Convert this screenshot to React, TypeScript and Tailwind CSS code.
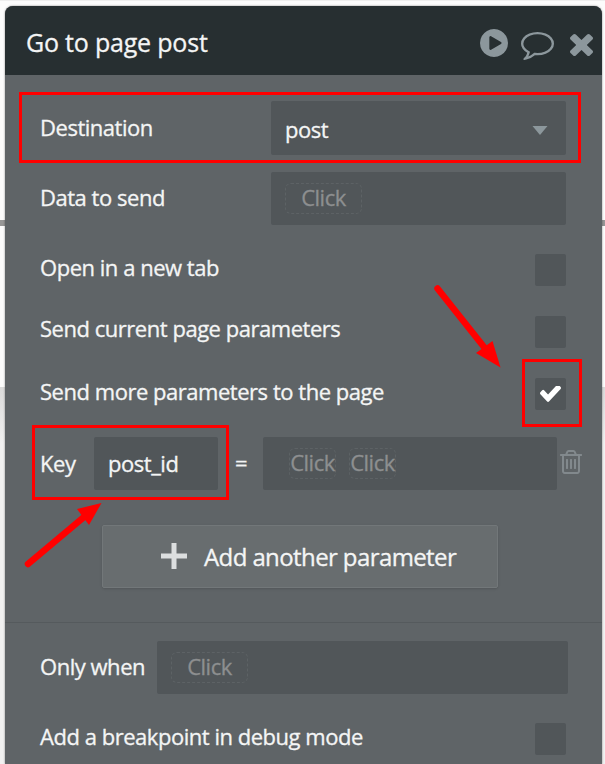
import type { ReactNode } from "react";

type IconProps = { box: string; d: string; className: string };

function Glyph({ box, d, className }: IconProps) {
  return (
    <svg viewBox={box} preserveAspectRatio="none" fill="currentColor" className={`block shrink-0 ${className}`}>
      <path d={d} />
    </svg>
  );
}

const PLAY =
  "M896 128q209 0 385.5 103t279.5 279.5 103 385.5-103 385.5-279.5 279.5-385.5 103-385.5-103-279.5-279.5-103-385.5 103-385.5 279.5-279.5 385.5-103zm384 823q32-18 32-55t-32-55l-544-320q-31-19-64-1-32 19-32 55v640q0 36 32 55 16 8 32 8 17 0 32-9z";
const COMMENT =
  "M896 384q-204 0-381.5 69.5t-282 187.5-104.5 255q0 112 71.5 213.5t201.5 175.5l87 50-27 96q-24 91-70 172 152-63 275-171l43-38 57 6q69 8 130 8 204 0 381.5-69.5t282-187.5 104.5-255-104.5-255-282-187.5-381.5-69.5zm896 512q0 174-120 321.5t-326 233-450 85.5q-70 0-145-8-198 175-460 242-49 14-114 22h-5q-15 0-27-10.5t-16-27.5v-1q-3-4-.5-12t2-10 4.5-9.5l6-9 7-8.5 8-9q7-8 31-34.5t34.5-38 31-39.5 32.5-51 27-59 26-76q-157-89-247.5-220t-90.5-281q0-174 120-321.5t326-233 450-85.5 450 85.5 326 233 120 321.5z";
const TIMES =
  "M1490 1322q0 40-28 68l-136 136q-28 28-68 28t-68-28l-294-294-294 294q-28 28-68 28t-68-28l-136-136q-28-28-28-68t28-68l294-294-294-294q-28-28-28-68t28-68l136-136q28-28 68-28t68 28l294 294 294-294q28-28 68-28t68 28l136 136q28 28 28 68t-28 68l-294 294 294 294q28 28 28 68z";
const CHECK =
  "M1671 566q0 40-28 68l-724 724-136 136q-28 28-68 28t-68-28l-136-136-362-362q-28-28-28-68t28-68l136-136q28-28 68-28t68 28l294 295 656-657q28-28 68-28t68 28l136 136q28 28 28 68z";
const TRASH =
  "M704 736v576q0 14-9 23t-23 9h-64q-14 0-23-9t-9-23v-576q0-14 9-23t23-9h64q14 0 23 9t9 23zm256 0v576q0 14-9 23t-23 9h-64q-14 0-23-9t-9-23v-576q0-14 9-23t23-9h64q14 0 23 9t9 23zm256 0v576q0 14-9 23t-23 9h-64q-14 0-23-9t-9-23v-576q0-14 9-23t23-9h64q14 0 23 9t9 23zm128 724v-948h-896v948q0 22 7 40.5t14.5 27 10.5 8.5h832q3 0 10.5-8.5t14.5-27 7-40.5zm-672-1076h448l-48-117q-7-9-17-11h-317q-10 2-17 11zm928 32v64q0 14-9 23t-23 9h-96v948q0 83-47 143.5t-113 60.5h-832q-66 0-113-58.5t-47-141.5v-952h-96q-14 0-23-9t-9-23v-64q0-14 9-23t23-9h309l70-167q15-37 54-63t79-26h320q40 0 79 26t54 63l70 167h309q14 0 23 9t9 23z";

function Row({ label, className, lift = "pb-1.5", children }: { label: string; className: string; lift?: string; children: ReactNode }) {
  return (
    <div className={`flex items-center justify-between pl-[35px] pr-9 ${className}`}>
      <span className={`whitespace-nowrap ${lift}`}>{label}</span>
      {children}
    </div>
  );
}

function Checkbox({ checked = false }: { checked?: boolean }) {
  return (
    <div className="flex h-8 w-[31px] items-center justify-center rounded-xs bg-[#515659] text-white">
      {checked && <Glyph box="121 434 1550 1088" d={CHECK} className="h-4 w-[21px]" />}
    </div>
  );
}

function Click({ className = "w-[77px]" }: { className?: string }) {
  return (
    <span className={`flex h-[31px] items-center justify-center rounded-md border border-dashed border-[#5d6265] pb-1 text-[#8d8f90] ${className}`}>
      Click
    </span>
  );
}

export default function App() {
  return (
    <div className="relative h-[764px] w-[605px] overflow-hidden bg-[#f1f1f1] pl-[5px] pt-1.5 font-['Open_Sans',sans-serif] text-[22px] leading-[30px] tracking-[-0.47px] text-[#f4f5f5] [-webkit-text-stroke:0.3px_currentColor]">
      <div className="absolute inset-x-0 top-0 h-[387px] border-t border-[#eeeeee] bg-[#fcfcfc]" />
      <div className="absolute inset-x-0 top-[220px] h-1.5 bg-[#969696]" />
      <div className="absolute inset-x-0 bottom-0 top-[387px] bg-linear-to-b from-[#dadada] to-[#f1f1f1] to-15%" />

      <div className="relative h-[758px] w-[597px] overflow-hidden rounded-t-lg bg-[#5f6467] shadow-[0_0_2px_rgba(0,0,0,0.5)]">
        <header className="flex h-[69px] items-center bg-[#272f31] pl-[21px] pr-[9px] text-[#8c979c]">
          <h1 className="mr-auto pt-[3px] text-[25px] tracking-[-0.2px] text-[#f4f5f5]">Go to page post</h1>
          <Glyph box="128 128 1536 1536" d={PLAY} className="mr-[13px] mt-1 h-7 w-7" />
          <Glyph box="0 256 1792 1537" d={COMMENT} className="mr-4 mt-2.5 h-7 w-[33px]" />
          <Glyph box="302 366 1188 1188" d={TIMES} className="mt-2 h-[22px] w-[23px]" />
        </header>

        <Row label="Destination" lift="pb-0.5" className="mt-[26px] h-[54px]">
          <div className="flex h-full w-[295px] items-center justify-between rounded-xs bg-[#515659] pl-3.5 pr-[18px]">
            <span className="mt-0.5">post</span>
            <svg viewBox="0 0 16 9" className="mt-1 h-[9px] w-4 fill-[#8c979c]">
              <path d="M0.5 0h15L8 9z" />
            </svg>
          </div>
        </Row>
        <Row label="Data to send" lift="pb-1" className="mt-[17px] h-[53px]">
          <div className="flex h-full w-[295px] items-center rounded-xs bg-[#515659] pl-3.5">
            <Click />
          </div>
        </Row>
        <Row label="Open in a new tab" className="mt-[29px] h-8">
          <Checkbox />
        </Row>
        <Row label="Send current page parameters" lift="pb-2" className="mt-[30px] h-8">
          <Checkbox />
        </Row>
        <Row label="Send more parameters to the page" className="mt-[30px] h-8">
          <Checkbox checked />
        </Row>

        <div className="mt-[27px] flex h-[53px] items-center pl-[35px]">
          <span className="w-[54px] pb-0.5">Key</span>
          <div className="flex h-full w-[124px] items-center rounded-xs bg-[#515659] pb-0.5 pl-3.5">post_id</div>
          <span className="w-[45px] pb-1 pl-[17px]">=</span>
          <div className="flex h-full w-[294px] items-center rounded-xs bg-[#515659] pl-[26px]">
            <Click className="w-[47px]" />
            <Click className="ml-[13px] w-[47px]" />
          </div>
          <Glyph box="192 128 1408 1536" d={TRASH} className="mb-1 ml-[3px] h-6 w-[22px] text-[#82898d]" />
        </div>

        <button className="ml-[97px] mt-[35px] flex h-[63px] w-[396px] items-center rounded-xs border border-[#727779] bg-[#686d6f] pl-[58px] text-[24px] tracking-[-0.6px] shadow-sm">
          <svg viewBox="0 0 26 26" className="mb-0.5 mr-[17px] h-[26px] w-[26px] stroke-[#dcdedf]" strokeWidth="5">
            <path d="M0 13h26M13 0v26" />
          </svg>
          <span className="whitespace-nowrap">Add another parameter</span>
        </button>

        <div className="mt-[34px] h-px bg-[#555a5d]" />

        <div className="mt-[18px] flex h-[53px] items-center pl-[35px]">
          <span className="w-[117px] whitespace-nowrap pb-1">Only when</span>
          <div className="flex h-full w-[411px] items-center rounded-xs bg-[#515659] pl-3.5">
            <Click />
          </div>
        </div>
        <Row label="Add a breakpoint in debug mode" className="mt-[29px] h-8">
          <Checkbox />
        </Row>
      </div>

      {/* Tutorial callouts layered over the panel */}
      <div className="absolute left-[19px] top-[92px] h-[71px] w-[562px] border-3 border-[#ff0000]" />
      <div className="absolute left-[522px] top-[359px] h-[68px] w-[60px] border-3 border-[#ff0000]" />
      <div className="absolute left-[32px] top-[425px] h-[75px] w-[197px] border-3 border-[#ff0000]" />
      <svg viewBox="0 0 605 764" className="absolute left-0 top-0 h-[764px] w-[605px] fill-[#ff0000] stroke-[#ff0000]">
        <path d="M437.500 288.500L484 347" strokeWidth="6.500" strokeLinecap="round" />
        <path d="M476 353L492.500 341L500.500 367.500z" stroke="none" />
        <path d="M28 564L84 517" strokeWidth="6.500" strokeLinecap="round" />
        <path d="M77 509L101.500 503L89 525z" stroke="none" />
      </svg>
    </div>
  );
}
